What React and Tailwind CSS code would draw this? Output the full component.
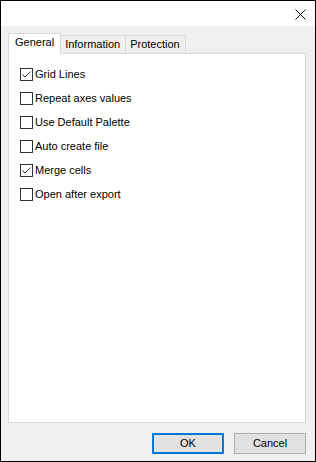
import React, { useState } from 'react';

const options = [
  { label: 'Grid Lines', checked: true },
  { label: 'Repeat axes values', checked: false },
  { label: 'Use Default Palette', checked: false },
  { label: 'Auto create file', checked: false },
  { label: 'Merge cells', checked: true },
  { label: 'Open after export', checked: false },
];

const CheckBox = ({ checked }) => (
  <span className="w-[13px] h-[13px] border border-[#333333] bg-white flex items-center justify-center shrink-0">
    {checked && (
      <svg width="11" height="11" viewBox="0 0 11 11" fill="none">
        <path d="M1.5 5.5 L4 8 L9.5 2.5" stroke="#333333" strokeWidth="1" />
      </svg>
    )}
  </span>
);

const App = () => {
  const [items, setItems] = useState(options);
  const [tab, setTab] = useState('General');

  const toggle = (i) => {
    setItems(items.map((it, idx) => (idx === i ? { ...it, checked: !it.checked } : it)));
  };

  return (
    <div
      className="w-[316px] h-[462px] border border-black flex flex-col bg-[#f0f0f0] text-[11px] text-black"
      style={{ fontFamily: '"Liberation Sans", Arial, sans-serif' }}
    >
      {/* title bar */}
      <div className="h-[25px] bg-white flex justify-end items-center pr-[9px]">
        <svg width="11" height="11" viewBox="0 0 11 11" className="mt-[2px]">
          <path d="M0.5 0.5 L10.5 10.5 M10.5 0.5 L0.5 10.5" stroke="#111111" strokeWidth="1" />
        </svg>
      </div>

      <div className="flex-1 flex flex-col pl-[7px] pr-[9px] pt-[7px] pb-[7px]">
        {/* tabs */}
        <div className="flex items-end h-[20px] relative z-10">
          {['General', 'Information', 'Protection'].map((t) =>
            tab === t ? (
              <button
                key={t}
                onClick={() => setTab(t)}
                className="h-[21px] -mb-px bg-white border border-b-0 border-[#d9d9d9] px-[6px] pb-[3px] leading-none"
              >
                {t}
              </button>
            ) : (
              <button
                key={t}
                onClick={() => setTab(t)}
                className="h-[18px] bg-[#f0f0f0] border border-b-0 border-l-0 border-[#d9d9d9] pl-[4px] pr-[5px] leading-none"
              >
                {t}
              </button>
            )
          )}
        </div>

        {/* panel */}
        <div className="flex-1 bg-white border border-[#d9d9d9] pt-[8px] pl-[11px]">
          {tab === 'General' && (
            <div className="flex flex-col">
              {items.map((it, i) => (
                <label
                  key={it.label}
                  onClick={() => toggle(i)}
                  className="h-[24px] flex items-center gap-[2px] cursor-default select-none"
                >
                  <CheckBox checked={it.checked} />
                  <span>{it.label}</span>
                </label>
              ))}
            </div>
          )}
        </div>

        {/* buttons */}
        <div className="flex justify-end gap-[10px] mt-[10px] pr-0">
          <button className="w-[72px] h-[21px] bg-[#e1e1e1] border-2 border-[#0078d7]">OK</button>
          <button className="w-[72px] h-[21px] bg-[#e1e1e1] border border-[#adadad]">Cancel</button>
        </div>
      </div>
    </div>
  );
};

export default App;
